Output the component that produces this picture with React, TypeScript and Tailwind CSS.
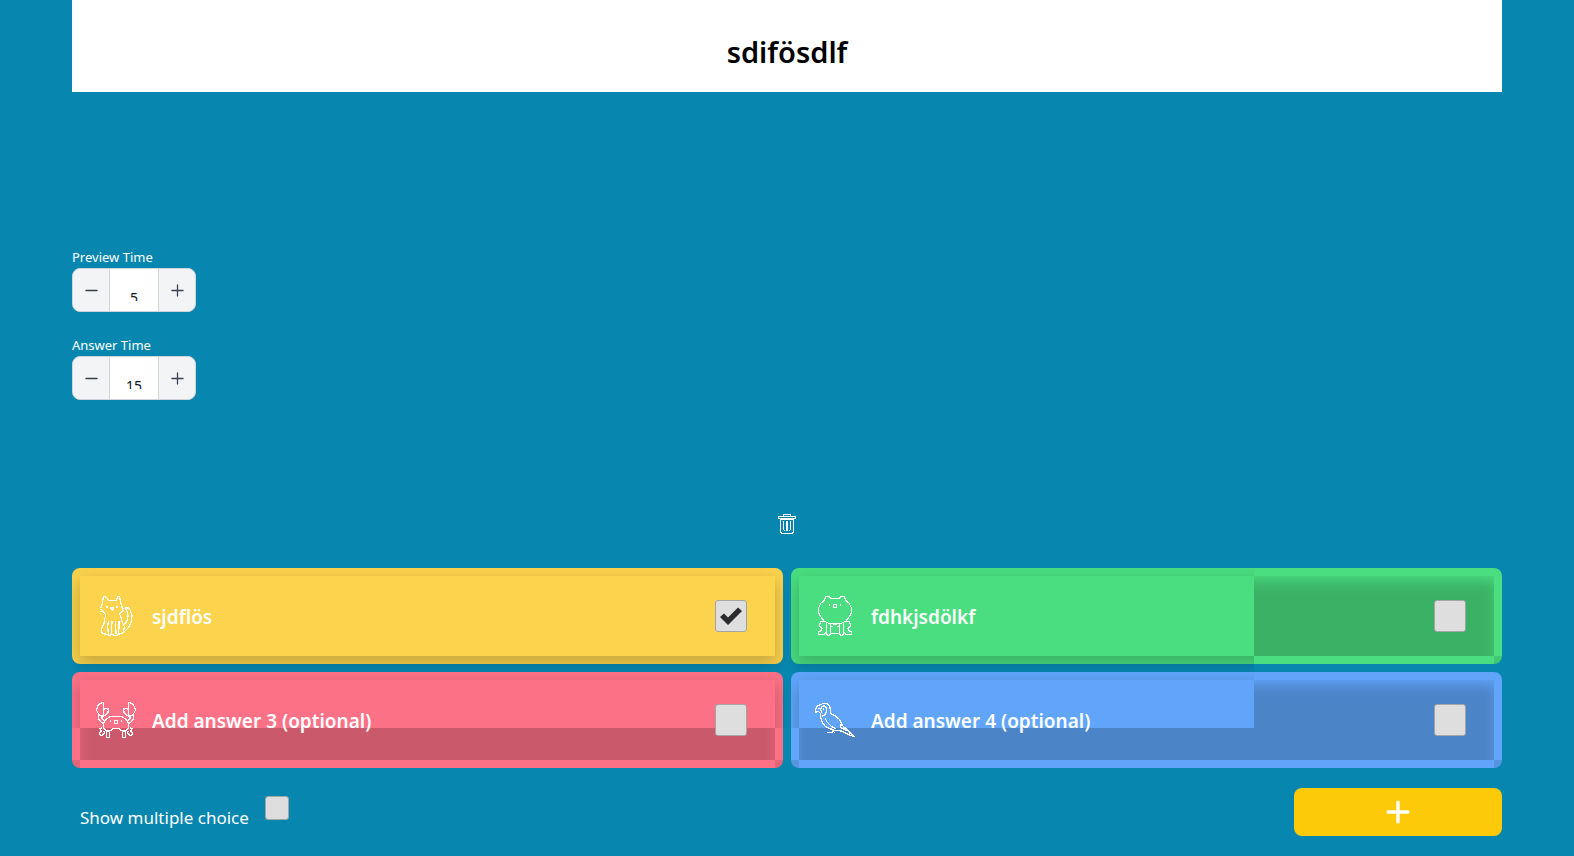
import { useState } from "react";
import type { ReactNode } from "react";
import { Minus, Plus } from "lucide-react";

function Drawing({ children }: { children: ReactNode }) {
  return (
    <svg
      className="relative size-10 shrink-0"
      viewBox="0 0 40 40"
      fill="none"
      stroke="white"
      strokeWidth="1.3"
      strokeLinejoin="round"
      shapeRendering="crispEdges"
      aria-hidden="true"
    >
      {children}
    </svg>
  );
}

function CatDrawing() {
  return (
    <Drawing>
      <path d="M9 .5 7.500 .5 6.500 6 5.500 11 4.500 12 M9 .5 11 2 13 4.500H20L22 .5 23.500 .5 24.500 6 26 11 27 15 M4 13 6 14 M4.500 16 7 15 9 18 10 20 8.500 23 8 28 5.500 32 6 37 9 38 12 38.500 13 39.500 16 38.500 19 39.500 22 39 23 38 27 37 28.500 31 26 26 25 21 23.500 18 27 14.500 M26 11 28 13" />
      <path d="M12.500 25 11.500 31 12.500 38 M16 25 15.500 38 M19.500 25 20 38 M23 25 23 31 22.500 38" />
      <path d="M29 12H33L35 16 36 20 35.500 25 33 31 29 35 26 37 M29 12 31 15 32 20 31 25 28 29" />
      <path d="M11 9.500V12 M21 9.500V12" strokeWidth="2" />
      <path d="M14.500 12H18L16.500 14.500Z" fill="white" />
    </Drawing>
  );
}

function BearDrawing() {
  const side = (
    <>
      <path d="M20 2.500H16L14 .5H11L9.500 4 6 7 3.500 12 3.500 17 6 21 9 25 14 27.500 20 28" />
      <path d="M9 25.500H6L4.500 28 5 31 7 32 6 35 3.500 36 3.500 38.500 9 38.500 11.500 36.500 M11.500 26V38.500L13 39.500 15.500 38.500V28" />
      <path d="M14.500 8V9.500" />
    </>
  );
  return (
    <Drawing>
      {side}
      <g transform="translate(40 0) scale(-1 1)">{side}</g>
      <path d="M18.500 8.500H21.500V11.500H18.500Z M15.500 30.500H18 M22 30.500H24.500 M15.500 37.500H24.500" />
    </Drawing>
  );
}

function CrabDrawing() {
  const side = (
    <>
      <path d="M7.500 2.500 4 3.500 1.500 6.500 .5 10 3 15 5.500 16H8L12 12.500 12.500 9 9 8.500 7.500 10Z M7.500 10V15" />
      <path d="M2.500 15 2.500 19 5 22 8 24 M6 16.500 6 19 9 21" />
      <path d="M20 16.500H14L10 19.500 7.500 23 7.500 28 10 31 H14L17 28.500H20" />
      <path d="M6 28 4 28.500 5.500 31 3.500 33 4 35 6 35.500 8.500 33 8 31 M10.500 31.500V37.500H13.500V32" />
      <path d="M14.500 20V22" />
    </>
  );
  return (
    <Drawing>
      {side}
      <g transform="translate(40 0) scale(-1 1)">{side}</g>
      <path d="M18.500 20.500H21.500V23.500H18.500Z" />
    </Drawing>
  );
}

function ParrotDrawing() {
  return (
    <Drawing>
      <path d="M6 4.500 8 3.500H12L14.500 6 15.500 10 16 14 20 15.500 24 19 26.500 23 28 26 39 36.500 33 34.500 27 31 20 30.500 14 28.500 10 26 6.500 21 5.500 16 5.500 13" />
      <path d="M6 4.500 2.500 6 .5 9 1 12.500 3 11 5.500 13.500 7 12 5.500 10 6.500 7 9 5.500 11 7 11.500 11 10 15 7 16 M2.500 8.500H5" />
      <path d="M10 18 12 22 16 26 21 29 M26.500 23 25.500 27 29 29.500 M28 26 31 31 33 30 35 34" />
      <path d="M15 28 17 29 17.500 32.500H11.500 M17 31 20 32.500" />
      <path d="M8.500 8V10" />
    </Drawing>
  );
}

function TrashDrawing() {
  return (
    <svg className="h-5 w-[18px]" viewBox="0 0 18 20" fill="none" stroke="white" strokeWidth="1.3" shapeRendering="crispEdges" aria-hidden="true">
      <path d="M5.500 2V.5H12.500V2 M.5 4.500V3L1.500 2.500H16.500L17.500 3V4.500H.5 M2.500 5V17L3.500 19.500H14.500L15.500 17V5 M2.500 5.500H15.500" />
      <path d="M5.500 7V15L6.500 17 M12.500 7V15L11.500 17" />
      <path d="M9 7V17" strokeWidth="2" />
    </svg>
  );
}

const tick = (
  <svg className="pointer-events-none absolute inset-0 size-full" viewBox="0 0 32 32" aria-hidden="true">
    <path d="M5 17 9 13.500 13 17.500 23 7.500 27 11 13 25Z" fill="#2b2b2d" />
  </svg>
);

function Tick({ label, checked = false }: { label: string; checked?: boolean }) {
  const [on, setOn] = useState(checked);
  return (
    <span className="relative block size-8 shrink-0">
      <input
        type="checkbox"
        aria-label={label}
        checked={on}
        onChange={(e) => setOn(e.target.checked)}
        className="block size-8 appearance-none rounded-[3px] border border-[#a3a3a3] bg-[#dedede]"
      />
      {on && tick}
    </span>
  );
}

type Answer = {
  value: string;
  placeholder: string;
  checked?: boolean;
  color: string;
  ring: string;
  shade: string;
  corners: string;
  icon: ReactNode;
};

const answers: Answer[] = [
  {
    value: "sjdflös",
    placeholder: "Add answer 1",
    checked: true,
    color: "bg-[#fcd34d]",
    ring: "[clip-path:inset(0_-8px_-8px_0)]",
    shade: "hidden",
    corners: "hidden",
    icon: <CatDrawing />,
  },
  {
    value: "fdhkjsdölkf",
    placeholder: "Add answer 2",
    color: "bg-[#4ade80]",
    ring: "[clip-path:inset(0_248px_-8px_0)]",
    shade: "[clip-path:inset(0_0_0_calc(100%-240px))]",
    corners: "justify-end",
    icon: <BearDrawing />,
  },
  {
    value: "",
    placeholder: "Add answer 3 (optional)",
    color: "bg-[#fd7186]",
    ring: "[clip-path:inset(0_-8px_40px_0)]",
    shade: "[clip-path:inset(48px_0_0_0)]",
    corners: "justify-between",
    icon: <CrabDrawing />,
  },
  {
    value: "",
    placeholder: "Add answer 4 (optional)",
    color: "bg-[#60a5fa]",
    ring: "[clip-path:inset(0_248px_40px_0)]",
    shade:
      "[clip-path:polygon(calc(100%-240px)_0,100%_0,100%_100%,0_100%,0_48px,calc(100%-240px)_48px)]",
    corners: "justify-between",
    icon: <ParrotDrawing />,
  },
];

function AnswerCard({ answer, index }: { answer: Answer; index: number }) {
  return (
    <div className={`relative rounded-lg p-2 ${answer.color}`}>
      <div className={`pointer-events-none absolute inset-0 p-2 ${answer.ring}`}>
        <div className="size-full shadow-[0_7px_16px_2px_rgba(0,0,0,0.2)]" />
      </div>
      <div className={`pointer-events-none absolute inset-2 overflow-hidden ${answer.shade}`}>
        <div className="absolute -inset-x-1 -bottom-4 top-1 bg-black/20 blur-[7px]" />
      </div>
      <div className={`pointer-events-none absolute inset-0 flex items-end overflow-hidden rounded-lg ${answer.corners}`}>
        <span className="size-2 bg-black/10" />
        {answer.corners === "justify-between" && <span className="size-2 bg-black/10" />}
      </div>
      <div className="flex h-20 items-center gap-4 pr-7 pl-4">
        {answer.icon}
        <input
          aria-label={`Answer ${index + 1}`}
          defaultValue={answer.value}
          placeholder={answer.placeholder}
          className="relative min-w-0 flex-1 bg-transparent pt-0.5 text-[19px] leading-7 font-semibold text-white outline-none placeholder:text-white placeholder:opacity-100"
        />
        <Tick label={`Answer ${index + 1} is correct`} checked={answer.checked} />
      </div>
    </div>
  );
}

function Stepper({ id, label, initial }: { id: string; label: string; initial: number }) {
  const [value, setValue] = useState(initial);
  return (
    <div>
      <label htmlFor={id} className="block pb-0.5 text-[13px] leading-[18px]">
        {label}
      </label>
      <div className="flex h-11 w-31 overflow-hidden rounded-lg border border-[#d1d5db] bg-[#f3f4f6] text-[#374151]">
        <button type="button" aria-label={`Decrease ${label}`} onClick={() => setValue(value - 1)} className="flex w-9 items-center justify-center">
          <Minus size={19} strokeWidth={1.6} />
        </button>
        <div className="flex-1 border-x border-[#d1d5db] bg-white">
          <div className="h-8 overflow-hidden">
            <input
              id={id}
              inputMode="numeric"
              value={value}
              onChange={(e) => setValue(Number(e.target.value) || 0)}
              className="h-14 w-full bg-transparent text-center text-sm text-[#111827] outline-none"
            />
          </div>
        </div>
        <button type="button" aria-label={`Increase ${label}`} onClick={() => setValue(value + 1)} className="flex w-9 items-center justify-center">
          <Plus size={19} strokeWidth={1.6} />
        </button>
      </div>
    </div>
  );
}

export default function App() {
  return (
    <main className="min-h-screen bg-[#0787b0] px-[72px] pb-5 font-['Noto_Sans',sans-serif] text-white">
      <header className="bg-white pt-8 pb-5">
        <input
          aria-label="Question"
          defaultValue="sdifösdlf"
          className="block h-10 w-full bg-transparent text-center text-[29px] font-semibold text-black outline-none"
        />
      </header>

      <section className="mt-39 flex flex-col gap-6">
        <Stepper id="preview-time" label="Preview Time" initial={5} />
        <Stepper id="answer-time" label="Answer Time" initial={15} />
      </section>

      <div className="mt-28 flex justify-center">
        <button type="button" aria-label="Delete question" className="flex size-6 items-center justify-center">
          <TrashDrawing />
        </button>
      </div>

      <section className="mt-8 grid grid-cols-2 gap-2">
        {answers.map((answer, index) => (
          <AnswerCard key={index} answer={answer} index={index} />
        ))}
      </section>

      <footer className="mt-5 flex items-start justify-between">
        <div className="flex items-start gap-4 pt-2 pl-2">
          <label htmlFor="multiple" className="pt-2 text-[17px] leading-7">
            Show multiple choice
          </label>
          <input
            id="multiple"
            type="checkbox"
            className="size-6 appearance-none rounded-[3px] border border-[#a3a3a3] bg-[#dedede] checked:bg-[#2b2b2d]"
          />
        </div>
        <button type="button" aria-label="Add question" className="flex h-12 w-52 items-center justify-center rounded-lg bg-[#fdca0a]">
          <Plus size={34} strokeWidth={2.4} />
        </button>
      </footer>
    </main>
  );
}
